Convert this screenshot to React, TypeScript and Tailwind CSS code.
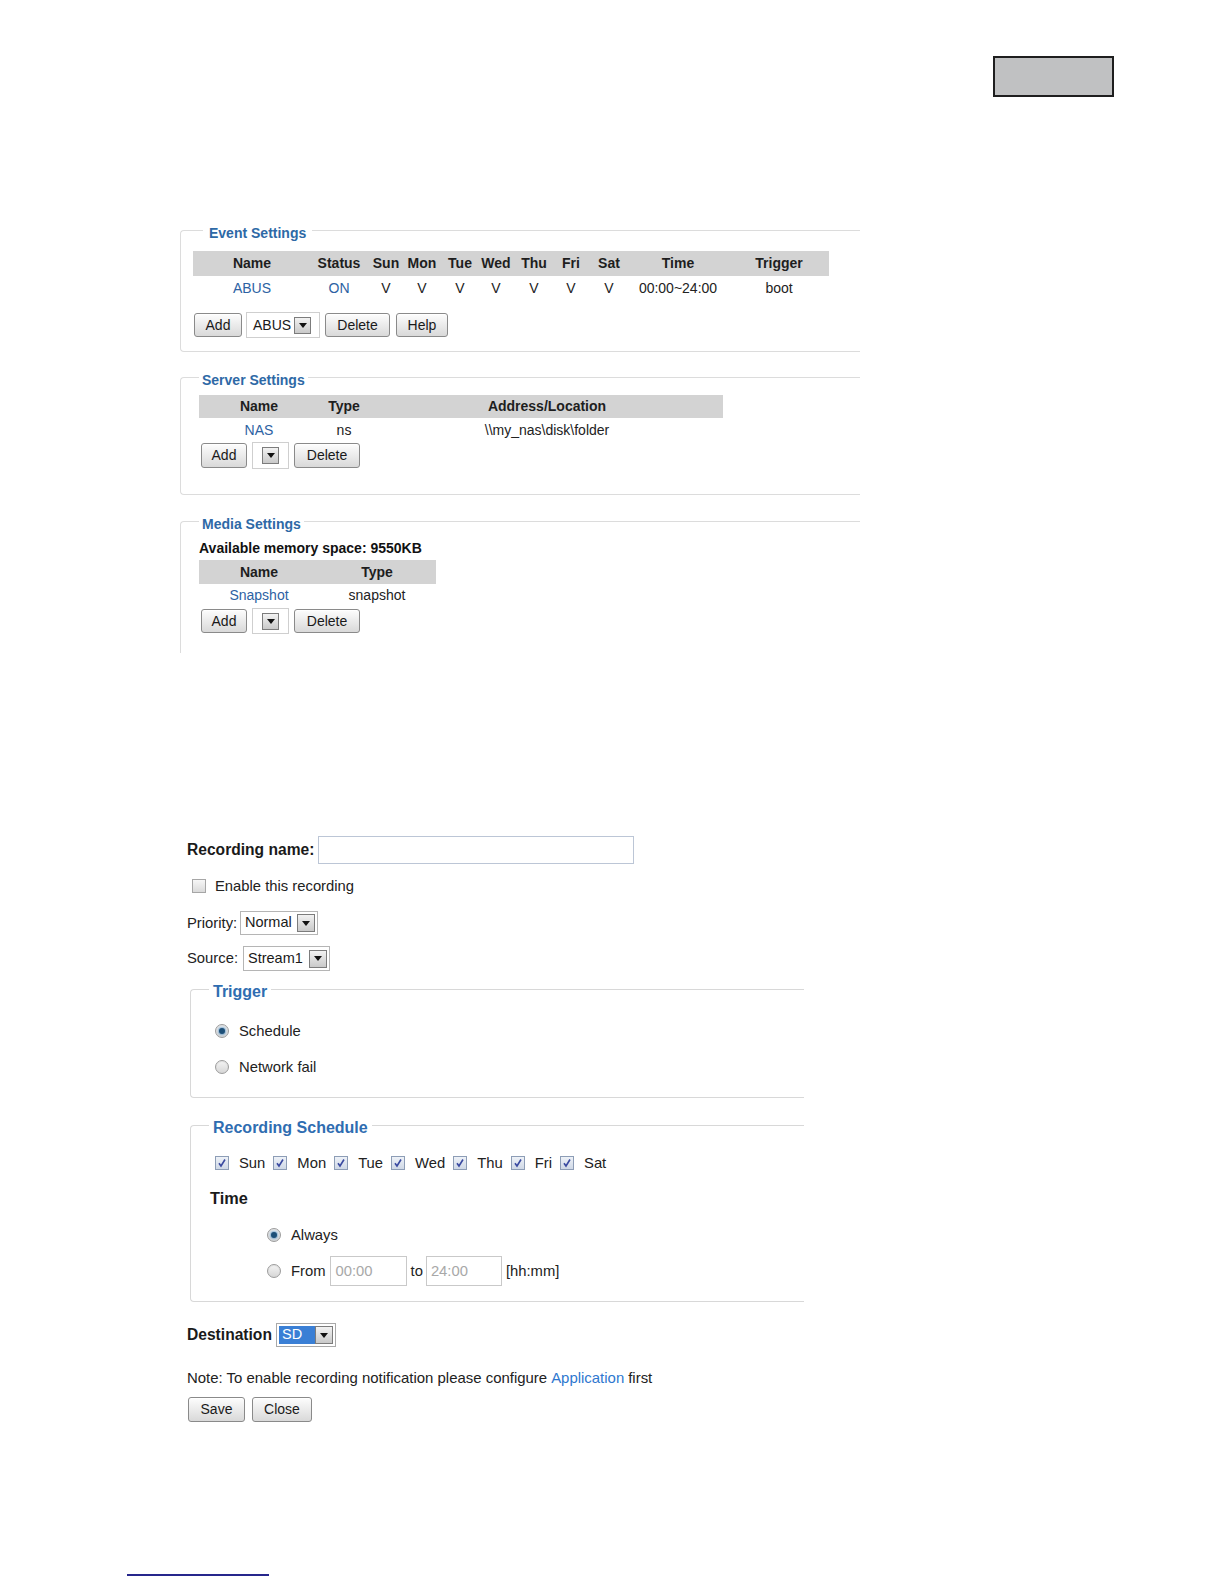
import React from "react";

const Btn = ({ label, cls }: { label: string; cls: string }) => (
  <div
    className={
      "flex items-center justify-center border border-[#8a8a8a] rounded-[3px] bg-linear-to-b from-[#fdfdfd] to-[#d9d9d9] text-[14px] text-[#1a1a1a] shadow-[inset_0_1px_0_#fff] " +
      cls
    }
  >
    {label}
  </div>
);

const Arrow = ({ cls = "" }: { cls?: string }) => (
  <div
    className={
      "flex items-center justify-center w-[17px] h-[17px] border border-[#7c7c7c] bg-linear-to-b from-[#f2f2f2] to-[#c9c9c9] " +
      cls
    }
  >
    <svg width="8" height="5" viewBox="0 0 8 5">
      <path d="M0 0 L8 0 L4 5 Z" fill="#111" />
    </svg>
  </div>
);

const Radio = ({ checked }: { checked?: boolean }) => (
  <div className="w-[14px] h-[14px] rounded-full border border-[#9c9c9c] bg-linear-to-b from-[#f4f4f4] to-[#d6d6d6] flex items-center justify-center shadow-[inset_0_1px_1px_rgba(0,0,0,0.08)]">
    {checked && (
      <div className="w-[6px] h-[6px] rounded-full bg-[#1d4f78] shadow-[0_0_2px_1px_rgba(90,150,200,0.7)]" />
    )}
  </div>
);

const Check = ({ checked }: { checked?: boolean }) =>
  checked ? (
    <div className="w-[14px] h-[14px] border border-[#8d9db6] bg-linear-to-b from-[#eef2f8] to-[#cfd8e6] flex items-center justify-center">
      <svg width="10" height="10" viewBox="0 0 10 10">
        <path d="M2 5.2 L4 8 L8 1.5" stroke="#3a4aa0" strokeWidth="1.6" fill="none" />
      </svg>
    </div>
  ) : (
    <div className="w-[14px] h-[14px] border border-[#a6a6a6] bg-linear-to-b from-[#f7f7f7] to-[#dadada]" />
  );

const eventCols = [
  { h: "Name", d: "ABUS", link: true, cls: "ml-[16px] w-[86px]" },
  { h: "Status", d: "ON", link: true, cls: "ml-[21px] w-[46px]" },
  { h: "Sun", d: "V", cls: "ml-[6px] w-[36px]" },
  { h: "Mon", d: "V", cls: "ml-[0px] w-[36px]" },
  { h: "Tue", d: "V", cls: "ml-[2px] w-[36px]" },
  { h: "Wed", d: "V", cls: "ml-[0px] w-[36px]" },
  { h: "Thu", d: "V", cls: "ml-[2px] w-[36px]" },
  { h: "Fri", d: "V", cls: "ml-[1px] w-[36px]" },
  { h: "Sat", d: "V", cls: "ml-[2px] w-[36px]" },
  { h: "Time", d: "00:00~24:00", cls: "ml-[17px] w-[68px]" },
  { h: "Trigger", d: "boot", cls: "ml-[27px] w-[80px]" },
];

const serverCols = [
  { h: "Name", d: "NAS", link: true, cls: "ml-[20px] w-[80px]" },
  { h: "Type", d: "ns", cls: "ml-[5px] w-[80px]" },
  { h: "Address/Location", d: "\\\\my_nas\\disk\\folder", cls: "ml-[63px] w-[200px]" },
];

const mediaCols = [
  { h: "Name", d: "Snapshot", link: true, cls: "ml-[15px] w-[90px]" },
  { h: "Type", d: "snapshot", cls: "ml-[23px] w-[100px]" },
];

type Col = { h: string; d: string; link?: boolean; cls: string };

const Table = ({ cols, barCls, rowCls }: { cols: Col[]; barCls: string; rowCls: string }) => (
  <div>
    <div className={"flex items-center bg-[#d3d3d3] " + barCls}>
      {cols.map((c) => (
        <div key={c.h} className={"flex justify-center whitespace-nowrap font-bold text-[14px] text-[#1e1e1e] " + c.cls}>
          {c.h}
        </div>
      ))}
    </div>
    <div className={"flex items-center " + rowCls}>
      {cols.map((c, i) => (
        <div
          key={c.h + i}
          className={
            "flex justify-center whitespace-nowrap text-[14px] " +
            (c.link ? "text-[#2d62a3] " : "text-[#222] ") +
            c.cls
          }
        >
          {c.d}
        </div>
      ))}
    </div>
  </div>
);

const UpperLegend = ({ text, cls }: { text: string; cls: string }) => (
  <legend className={"leading-[18px] font-bold text-[14px] text-[#2e69a6] " + cls}>
    <span className="relative top-[3px]">{text}</span>
  </legend>
);

const LowerLegend = ({ text }: { text: string }) => (
  <legend className="leading-[18px] font-bold text-[16px] text-[#2f6db1] px-[4px]">
    <span className="relative top-[3px]">{text}</span>
  </legend>
);

export default function App() {
  return (
    <div className="relative w-[1224px] min-h-[1584px] bg-white font-['Liberation_Sans',Arial,sans-serif] text-[#222]">
      {/* top gray box */}
      <div className="flex justify-end pr-[110px] pt-[56px]">
        <div className="w-[121px] h-[41px] border-2 border-[#1e1e1e] bg-[#c0c1c2]" />
      </div>

      {/* Event Settings */}
      <fieldset className="ml-[180px] mt-[124px] w-[680px] border border-r-0 border-[#dcdcdc] rounded-l-[4px] pl-[12px] pt-[12px] pb-[13px]">
        <UpperLegend text="Event Settings" cls="ml-[10px] px-[6px]" />
        <Table cols={eventCols} barCls="w-[636px] h-[25px]" rowCls="h-[24px]" />
        <div className="flex items-center mt-[12px] ml-[1px]">
          <Btn label="Add" cls="w-[48px] h-[24px]" />
          <div className="ml-[4px] w-[74px] h-[26px] border border-[#cfcfcf] bg-white flex items-center pl-[6px]">
            <span className="text-[14px] text-[#1a1a1a]">ABUS</span>
            <Arrow cls="ml-[3px]" />
          </div>
          <Btn label="Delete" cls="ml-[5px] w-[65px] h-[24px]" />
          <Btn label="Help" cls="ml-[6px] w-[52px] h-[24px]" />
        </div>
      </fieldset>

      {/* Server Settings */}
      <fieldset className="ml-[180px] mt-[16px] w-[680px] border border-r-0 border-[#dcdcdc] rounded-l-[4px] pl-[18px] pt-[9px] pb-[25px]">
        <UpperLegend text="Server Settings" cls="px-[3px]" />
        <Table cols={serverCols} barCls="w-[524px] h-[23px]" rowCls="h-[25px]" />
        <div className="flex items-center ml-[2px] -mt-[1px]">
          <Btn label="Add" cls="w-[46px] h-[25px]" />
          <div className="ml-[5px] w-[37px] h-[27px] border border-[#cfcfcf] bg-white flex items-center justify-center">
            <Arrow />
          </div>
          <Btn label="Delete" cls="ml-[5px] w-[66px] h-[25px]" />
        </div>
      </fieldset>

      {/* Media Settings */}
      <fieldset className="ml-[180px] mt-[17px] w-[680px] border border-r-0 border-b-0 border-[#dcdcdc] rounded-tl-[4px] pl-[18px] pt-[8px] pb-[19px]">
        <UpperLegend text="Media Settings" cls="px-[3px]" />
        <div className="h-[20px] flex items-center font-bold text-[14px] text-[#111]">Available memory space: 9550KB</div>
        <div className="mt-[2px]">
          <Table cols={mediaCols} barCls="w-[237px] h-[24px]" rowCls="h-[22px]" />
        </div>
        <div className="flex items-center mt-[2px] ml-[2px]">
          <Btn label="Add" cls="w-[46px] h-[24px]" />
          <div className="ml-[5px] w-[37px] h-[26px] border border-[#cfcfcf] bg-white flex items-center justify-center">
            <Arrow />
          </div>
          <Btn label="Delete" cls="ml-[5px] w-[66px] h-[24px]" />
        </div>
      </fieldset>

      {/* Recording form */}
      <div className="pl-[187px] mt-[183px] text-[14.8px] text-[#222]">
        <div className="flex items-center h-[28px]">
          <div className="w-[131px] font-bold text-[15.6px] text-[#1a1a1a] whitespace-nowrap">Recording name:</div>
          <div className="w-[316px] h-[28px] border border-[#bcc6d6] bg-white" />
        </div>

        <div className="flex items-center h-[20px] mt-[12px] ml-[5px]">
          <Check />
          <span className="ml-[9px]">Enable this recording</span>
        </div>

        <div className="flex items-center h-[24px] mt-[15px]">
          <div className="w-[53px]">Priority:</div>
          <div className="w-[78px] h-[24px] border border-[#b5b5b5] bg-white flex items-center pl-[4px]">
            <span className="text-[14.5px] text-[#1a1a1a]">Normal</span>
            <Arrow cls="ml-auto mr-[2px] w-[18px] h-[18px]" />
          </div>
        </div>

        <div className="flex items-center h-[25px] mt-[11px]">
          <div className="w-[56px]">Source:</div>
          <div className="w-[87px] h-[25px] border border-[#b5b5b5] bg-white flex items-center pl-[4px]">
            <span className="text-[14.5px] text-[#1a1a1a]">Stream1</span>
            <Arrow cls="ml-auto mr-[2px] w-[18px] h-[18px]" />
          </div>
        </div>

        {/* Trigger */}
        <fieldset className="ml-[3px] mt-[9px] w-[614px] border border-r-0 border-[#d8d8d8] rounded-l-[4px] pl-[18px] pt-[23px] pb-[20px]">
          <LowerLegend text="Trigger" />
          <div className="flex items-center h-[20px] ml-[6px]">
            <Radio checked />
            <span className="ml-[10px]">Schedule</span>
          </div>
          <div className="flex items-center h-[20px] mt-[16px] ml-[6px]">
            <Radio />
            <span className="ml-[10px]">Network fail</span>
          </div>
        </fieldset>

        {/* Recording Schedule */}
        <fieldset className="ml-[3px] mt-[18px] w-[614px] border border-r-0 border-[#d8d8d8] rounded-l-[4px] pl-[18px] pt-[19px] pb-[15px]">
          <LowerLegend text="Recording Schedule" />
          <div className="flex items-center h-[20px] ml-[6px] gap-x-[8px]">
            {["Sun", "Mon", "Tue", "Wed", "Thu", "Fri", "Sat"].map((d) => (
              <div key={d} className="flex items-center">
                <Check checked />
                <span className="ml-[10px]">{d}</span>
              </div>
            ))}
          </div>
          <div className="flex items-center h-[20px] mt-[15px] ml-[1px] font-bold text-[16.3px] text-[#1a1a1a]">Time</div>
          <div className="flex items-center h-[20px] mt-[17px] ml-[58px]">
            <Radio checked />
            <span className="ml-[10px]">Always</span>
          </div>
          <div className="flex items-center h-[30px] mt-[11px] ml-[58px]">
            <Radio />
            <span className="ml-[10px]">From</span>
            <div className="ml-[4px] w-[77px] h-[30px] border border-[#c9c9c9] bg-white flex items-center pl-[5px] text-[#a8a8a8]">00:00</div>
            <span className="ml-[4px]">to</span>
            <div className="ml-[3px] w-[76px] h-[30px] border border-[#c9c9c9] bg-white flex items-center pl-[4px] text-[#a8a8a8]">24:00</div>
            <span className="ml-[4px]">[hh:mm]</span>
          </div>
        </fieldset>

        {/* Destination */}
        <div className="flex items-center h-[24px] mt-[21px]">
          <div className="w-[89px] font-bold text-[15.6px] text-[#1a1a1a]">Destination</div>
          <div className="w-[60px] h-[24px] border border-[#a9a9a9] bg-white flex items-center p-[2px]">
            <div className="h-full w-[36px] bg-[#3a7fd5] text-white flex items-center pl-[3px] text-[14.5px]">SD</div>
            <Arrow cls="ml-auto w-[18px] h-[18px]" />
          </div>
        </div>

        <div className="flex items-center h-[20px] mt-[21px] text-[14.95px]">
          Note: To enable recording notification please configure
          <span className="text-[#2f78cf] mx-[4px]">Application</span>
          first
        </div>

        <div className="flex items-center mt-[9px] ml-[1px]">
          <Btn label="Save" cls="w-[57px] h-[25px] text-[14.5px]" />
          <Btn label="Close" cls="ml-[7px] w-[60px] h-[25px] text-[14.5px]" />
        </div>
      </div>

      {/* bottom line */}
      <div className="ml-[127px] mt-[152px] w-[142px] h-[2px] bg-[#26268c]" />
    </div>
  );
}
